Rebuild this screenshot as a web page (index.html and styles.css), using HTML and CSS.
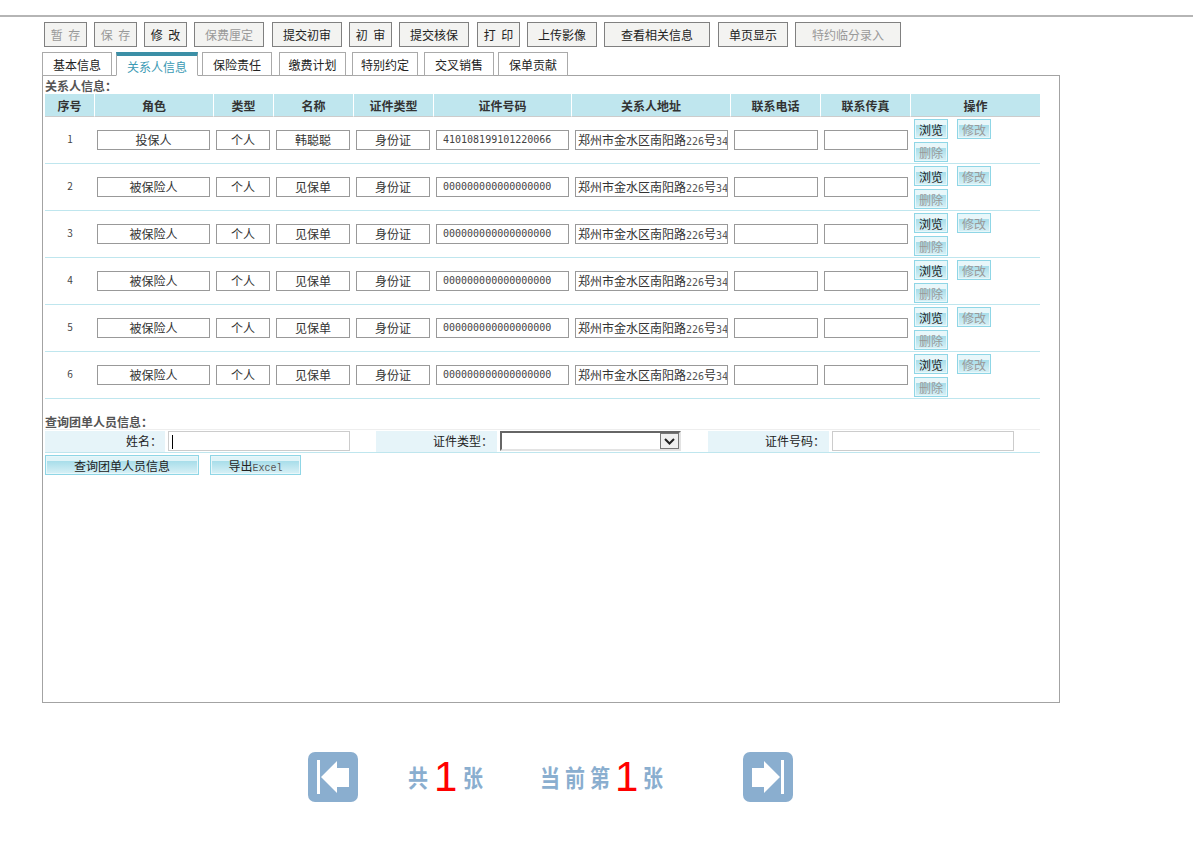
FILE: index.html
```html
<!DOCTYPE html>
<html lang="zh">
<head>
<meta charset="utf-8">
<title>关系人信息</title>
<link rel="stylesheet" href="styles.css">
</head>
<body>
<div class="page">
  <div class="toolbar">
    <button class="tool w2 off">暂 存</button>
    <button class="tool w2 off">保 存</button>
    <button class="tool w2">修 改</button>
    <button class="tool w4 off">保费厘定</button>
    <button class="tool w4">提交初审</button>
    <button class="tool w2">初 审</button>
    <button class="tool w4">提交核保</button>
    <button class="tool w2">打 印</button>
    <button class="tool w4">上传影像</button>
    <button class="tool w6">查看相关信息</button>
    <button class="tool w4">单页显示</button>
    <button class="tool w6 off">特约临分录入</button>
  </div>
  <div class="tabs">
    <div class="tab t1">基本信息</div>
    <div class="tab t2 active">关系人信息</div>
    <div class="tab t3">保险责任</div>
    <div class="tab t4">缴费计划</div>
    <div class="tab t5">特别约定</div>
    <div class="tab t6">交叉销售</div>
    <div class="tab t7">保单贡献</div>
  </div>
  <div class="panel">
    <div class="section-title first">关系人信息：</div>
    <table class="grid">
      <colgroup>
        <col class="c1"><col class="c2"><col class="c3"><col class="c4"><col class="c5"><col class="c6"><col class="c7"><col class="c8"><col class="c9"><col class="c10">
      </colgroup>
      <thead>
        <tr><th>序号</th><th>角色</th><th>类型</th><th>名称</th><th>证件类型</th><th>证件号码</th><th>关系人地址</th><th>联系电话</th><th>联系传真</th><th>操作</th></tr>
      </thead>
      <tbody>
        <tr>
          <td class="num">1</td>
          <td><div class="field center">投保人</div></td>
          <td><div class="field center">个人</div></td>
          <td><div class="field center">韩聪聪</div></td>
          <td><div class="field center">身份证</div></td>
          <td><div class="field digits">410108199101220066</div></td>
          <td><div class="field addr">郑州市金水区南阳路<span class="dg">226</span>号<span class="dg">34</span></div></td>
          <td><div class="field"></div></td>
          <td><div class="field"></div></td>
          <td class="ops"><div class="opsbox"><button class="mini">浏览</button><button class="mini off">修改</button><button class="mini off">删除</button></div></td>
        </tr>
        <tr>
          <td class="num">2</td>
          <td><div class="field center">被保险人</div></td>
          <td><div class="field center">个人</div></td>
          <td><div class="field center">见保单</div></td>
          <td><div class="field center">身份证</div></td>
          <td><div class="field digits">000000000000000000</div></td>
          <td><div class="field addr">郑州市金水区南阳路<span class="dg">226</span>号<span class="dg">34</span></div></td>
          <td><div class="field"></div></td>
          <td><div class="field"></div></td>
          <td class="ops"><div class="opsbox"><button class="mini">浏览</button><button class="mini off">修改</button><button class="mini off">删除</button></div></td>
        </tr>
        <tr>
          <td class="num">3</td>
          <td><div class="field center">被保险人</div></td>
          <td><div class="field center">个人</div></td>
          <td><div class="field center">见保单</div></td>
          <td><div class="field center">身份证</div></td>
          <td><div class="field digits">000000000000000000</div></td>
          <td><div class="field addr">郑州市金水区南阳路<span class="dg">226</span>号<span class="dg">34</span></div></td>
          <td><div class="field"></div></td>
          <td><div class="field"></div></td>
          <td class="ops"><div class="opsbox"><button class="mini">浏览</button><button class="mini off">修改</button><button class="mini off">删除</button></div></td>
        </tr>
        <tr>
          <td class="num">4</td>
          <td><div class="field center">被保险人</div></td>
          <td><div class="field center">个人</div></td>
          <td><div class="field center">见保单</div></td>
          <td><div class="field center">身份证</div></td>
          <td><div class="field digits">000000000000000000</div></td>
          <td><div class="field addr">郑州市金水区南阳路<span class="dg">226</span>号<span class="dg">34</span></div></td>
          <td><div class="field"></div></td>
          <td><div class="field"></div></td>
          <td class="ops"><div class="opsbox"><button class="mini">浏览</button><button class="mini off">修改</button><button class="mini off">删除</button></div></td>
        </tr>
        <tr>
          <td class="num">5</td>
          <td><div class="field center">被保险人</div></td>
          <td><div class="field center">个人</div></td>
          <td><div class="field center">见保单</div></td>
          <td><div class="field center">身份证</div></td>
          <td><div class="field digits">000000000000000000</div></td>
          <td><div class="field addr">郑州市金水区南阳路<span class="dg">226</span>号<span class="dg">34</span></div></td>
          <td><div class="field"></div></td>
          <td><div class="field"></div></td>
          <td class="ops"><div class="opsbox"><button class="mini">浏览</button><button class="mini off">修改</button><button class="mini off">删除</button></div></td>
        </tr>
        <tr>
          <td class="num">6</td>
          <td><div class="field center">被保险人</div></td>
          <td><div class="field center">个人</div></td>
          <td><div class="field center">见保单</div></td>
          <td><div class="field center">身份证</div></td>
          <td><div class="field digits">000000000000000000</div></td>
          <td><div class="field addr">郑州市金水区南阳路<span class="dg">226</span>号<span class="dg">34</span></div></td>
          <td><div class="field"></div></td>
          <td><div class="field"></div></td>
          <td class="ops"><div class="opsbox"><button class="mini">浏览</button><button class="mini off">修改</button><button class="mini off">删除</button></div></td>
        </tr>
      </tbody>
    </table>
    <div class="section-title second">查询团单人员信息：</div>
    <div class="query">
      <label class="qlabel">姓名：</label>
      <div class="qinput name"><span class="caret"></span></div>
      <label class="qlabel l2">证件类型：</label>
      <div class="qselect"><span class="arrow"><svg width="17" height="15" viewBox="0 0 17 15"><path d="M4 5l4.500 4.500L13 5" fill="none" stroke="#222" stroke-width="2"/></svg></span></div>
      <label class="qlabel l3">证件号码：</label>
      <div class="qinput"></div>
    </div>
    <div class="query-actions">
      <button class="wide q1">查询团单人员信息</button>
      <button class="wide q2">导出<span class="excel">Excel</span></button>
    </div>
  </div>
  <div class="pager">
    <svg class="nav" width="50" height="50" viewBox="0 0 50 50"><rect width="50" height="50" rx="7" fill="#8aaecf"/><rect x="9" y="8" width="3" height="34" fill="#fff"/><path d="M13 25 L29 9 V16 H41 V35 H29 V41 Z" fill="#fff"/></svg>
    <div class="count first"><span>共</span><b>1</b><span>张</span></div>
    <div class="count second"><span>当</span><span>前</span><span>第</span><b>1</b><span>张</span></div>
    <svg class="nav last" width="50" height="50" viewBox="0 0 50 50"><rect width="50" height="50" rx="7" fill="#8aaecf"/><rect x="38" y="8" width="3" height="34" fill="#fff"/><path d="M37 25 L21 9 V16 H9 V35 H21 V41 Z" fill="#fff"/></svg>
  </div>
</div>
</body>
</html>
```
FILE: styles.css
```css
* { box-sizing: border-box; }
html, body { margin: 0; padding: 0; background: #fff; }
body { font: 12px "Noto Sans CJK SC", sans-serif; color: #333; }
button { font-family: inherit; margin: 0; padding: 0; cursor: default; }

.page { border-top: 2px solid #b5b5b5; margin-top: 15px; padding-left: 42px; width: 1193px; height: 849px; }

.toolbar { display: flex; gap: 7px; padding: 5px 0 0 2px; height: 35px; }
.tool { height: 25px; border: 1px solid #808080; background: #f3f3f1; color: #222; font-size: 12px; line-height: 22px; }
.tool.off { color: #999; }
.tool:nth-child(5), .tool:nth-child(8), .tool:nth-child(11) { margin-left: 1px; }
.w2 { width: 43px; word-spacing: 3px; }
.w4 { width: 70px; }
.w6 { width: 106px; }

.tabs { display: flex; height: 23px; position: relative; z-index: 1; }
.tab { height: 24px; border: 1px solid #aaa; background: #fff; color: #222; font-size: 12px; line-height: 24px; text-align: center; }
.tab.active { border-top: 4px solid #3b8fa6; border-bottom-color: #fff; color: #3b9ab4; line-height: 22px; }
.t1 { width: 70px; margin-right: 4px; }
.t2 { width: 82px; margin-right: 4px; }
.t3 { width: 70px; margin-right: 7px; }
.t4 { width: 67px; margin-right: 6px; }
.t5 { width: 66px; margin-right: 6px; }
.t6 { width: 70px; margin-right: 4px; }
.t7 { width: 70px; }

.panel { width: 1018px; height: 628px; border: 1px solid #a3a3a3; padding: 2px 0 0 2px; }
.section-title { height: 15px; font-size: 12px; line-height: 15px; font-weight: 700; color: #555; }
.section-title.first { height: 16px; }
.section-title.second { margin-top: 15px; }

.grid { width: 995px; table-layout: fixed; border-collapse: separate; border-spacing: 0; }
.c1 { width: 50px; }
.c2 { width: 119px; }
.c3 { width: 60px; }
.c4 { width: 80px; }
.c5 { width: 80px; }
.c6 { width: 138px; }
.c7 { width: 159px; }
.c8 { width: 90px; }
.c9 { width: 90px; }
.c10 { width: 129px; }
.grid th { height: 23px; padding: 0; background: #bfe6ee; border-right: 1px solid #fff; border-bottom: 1px solid #ccc; font-size: 12px; font-weight: 700; color: #333; }
.grid th:last-child { border-right: 0; }
.grid td { height: 47px; padding: 0 4px 0 2px; border-bottom: 1px solid #bfe6ee; }
.grid td:nth-child(6) { padding-right: 3px; }
.grid td:nth-child(n+7) { padding: 0 3px; }
.grid td.num { padding: 0 0 3px; text-align: center; font-size: 10px; color: #444; }
.field { height: 20px; border: 1px solid #999; line-height: 18px; font-size: 12px; color: #333; white-space: nowrap; overflow: hidden; }
.field.center { text-align: center; }
.field.digits { padding-left: 6px; font-family: "DejaVu Sans Mono", monospace; font-size: 10px; color: #444; }
.field.addr { padding-left: 2px; }
.dg { font-family: "DejaVu Sans Mono", monospace; font-size: 10px; color: #555; }
.grid td.ops { padding: 2px 0 0 3px; vertical-align: top; }
.opsbox { display: grid; grid-template-columns: 34px 34px; grid-template-rows: 20px 20px; column-gap: 9px; row-gap: 3px; }
.mini { width: 34px; height: 20px; padding-top: 1px; border: 1px solid #8fd6e6; box-shadow: inset 0 0 0 1px #e8f7fa; background: linear-gradient(#e8f7fa 0, #e8f7fa 30%, #a9deea 30%, #d9f1f6 100%); color: #222; font-size: 12px; line-height: 18px; }
.mini.off { color: #999; }

.query { display: flex; width: 995px; height: 24px; border-top: 1px solid #eee; border-bottom: 1px solid #bfe6ee; padding-top: 1px; }
.qlabel { width: 120px; height: 21px; padding-right: 3px; background: #e6f4f9; text-align: right; line-height: 19px; color: #222; }
.qlabel.l2 { width: 121px; margin-left: 26px; padding-right: 4px; }
.qlabel.l3 { width: 121px; margin-left: 27px; padding-right: 4px; }
.qinput { width: 182px; height: 20px; margin-left: 3px; border: 1px solid #ccc; position: relative; }
.caret { position: absolute; left: 3px; top: 3px; width: 1px; height: 14px; background: #000; }
.qselect { width: 181px; height: 20px; margin-left: 3px; border: 2px solid; border-color: #666 #e3e3e3 #e3e3e3 #666; display: flex; justify-content: flex-end; }
.arrow { width: 19px; height: 16px; border: 1px solid #777; background: #f0f0f0; display: flex; align-items: center; justify-content: center; }

.query-actions { display: flex; gap: 11px; margin-top: 2px; }
.wide { height: 20px; padding-top: 1px; border: 1px solid #8fd6e6; box-shadow: inset 0 0 0 1px #e8f7fa; background: linear-gradient(#e0f4f8 0, #e0f4f8 30%, #a9deea 30%, #d9f1f6 100%); color: #222; font-size: 12px; line-height: 18px; }
.q1 { width: 154px; }
.q2 { width: 91px; }
.excel { font-family: "Liberation Mono", monospace; font-size: 10px; color: #555; }

.pager { display: flex; align-items: center; height: 50px; margin-top: 49px; padding-left: 266px; color: #8aaecf; }
.nav { flex: none; }
.count { display: flex; align-items: center; font-size: 20px; font-weight: 700; height: 50px; }
.count span { width: 19px; text-align: center; line-height: 1; transform: scaleY(1.2); }
.count b { width: 22px; color: #f00; font-family: "Liberation Sans", sans-serif; font-size: 42px; font-weight: 400; text-align: center; line-height: 1; }
.count.first { margin-left: 50px; gap: 7px; }
.count.second { margin-left: 58px; gap: 6px; }
.nav.last { margin-left: 81px; }
```
